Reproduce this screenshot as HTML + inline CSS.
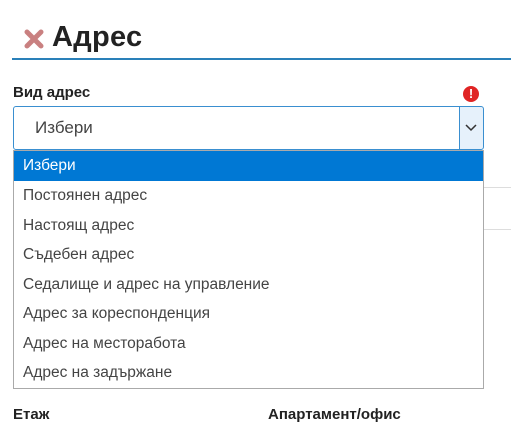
<!DOCTYPE html><html><head><style>
body{margin:0;width:511px;height:422px;background:#fff;position:relative;overflow:hidden;font-family:"Liberation Sans",sans-serif}
.a{position:absolute}
.opt{position:absolute;left:0;right:0;height:29.6px;line-height:29.6px;padding-left:9px;font-size:15.5px;color:#444}
</style></head><body>
<div class="a" style="left:24px;top:29px;width:20px;height:20px">
<svg width="20" height="20" viewBox="0 0 20 20"><path d="M3 3L17 17M17 3L3 17" stroke="#c98080" stroke-width="5" stroke-linecap="round"/></svg></div>
<div class="a" style="left:52px;top:21px;font-size:29px;color:#222;font-weight:bold;letter-spacing:0.3px">Адрес</div>
<div class="a" style="left:12px;top:58px;width:499px;height:2px;background:#2a80b9"></div>
<div class="a" style="left:13px;top:84px;font-size:15px;font-weight:bold;color:#222">Вид адрес</div>
<div class="a" style="left:463px;top:86px;width:16px;height:16px;border-radius:50%;background:#e02424;color:#fff;font-size:13px;font-weight:bold;text-align:center;line-height:16px">!</div>
<div class="a" style="left:13px;top:106px;width:468px;height:42px;border:1px solid #3a8fd0;border-radius:3px;background:#fff"></div>
<div class="a" style="left:35px;top:118px;font-size:17px;color:#444">Избери</div>
<div class="a" style="left:459px;top:106px;width:23px;height:42px;border:1px solid #3a8fd0;background:#e6f1fb;border-radius:0 3px 3px 0"></div>
<svg class="a" style="left:465px;top:124px" width="12" height="8"><path d="M1 1L6 6L11 1" stroke="#333" stroke-width="1.5" fill="none"/></svg>
<div class="a" style="left:484px;top:187px;width:27px;height:1px;background:#ddd"></div>
<div class="a" style="left:484px;top:229px;width:27px;height:1px;background:#ddd"></div>
<div class="a" style="left:13px;top:150px;width:469px;height:237px;border:1px solid #aaa;background:#fff">
<div class="opt" style="top:0;background:#0078d4;color:#fff">Избери</div>
<div class="opt" style="top:30px">Постоянен адрес</div>
<div class="opt" style="top:59.5px">Настоящ адрес</div>
<div class="opt" style="top:89px">Съдебен адрес</div>
<div class="opt" style="top:118.5px">Седалище и адрес на управление</div>
<div class="opt" style="top:148px">Адрес за кореспонденция</div>
<div class="opt" style="top:177.5px">Адрес на месторабота</div>
<div class="opt" style="top:207px">Адрес на задържане</div>
</div>
<div class="a" style="left:13px;top:406px;font-size:15px;font-weight:bold;color:#222">Етаж</div>
<div class="a" style="left:268px;top:406px;font-size:15px;font-weight:bold;color:#222">Апартамент/офис</div>
</body></html>
